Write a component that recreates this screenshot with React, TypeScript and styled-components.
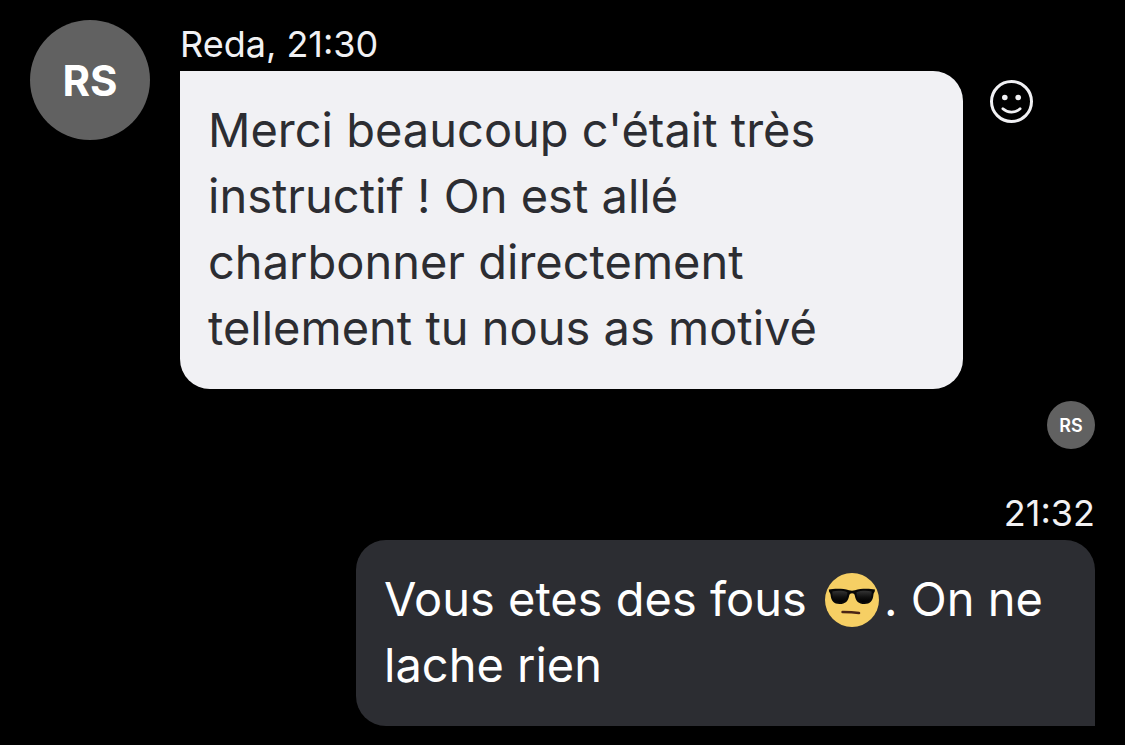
import React from "react";
import styled, { createGlobalStyle } from "styled-components";

const GlobalStyle = createGlobalStyle`
  *, *::before, *::after { box-sizing: border-box; }
  body {
    margin: 0;
    background: #000;
    font-family: Inter, "Liberation Sans", sans-serif;
  }
`;

const Conversation = styled.main`
  display: flex;
  flex-direction: column;
  padding: 20px 30px 19px;
`;

const IncomingRow = styled.article`
  display: flex;
  align-items: flex-start;
`;

const Avatar = styled.div<{ $small?: boolean }>`
  display: flex;
  flex: none;
  align-items: center;
  justify-content: center;
  width: ${(p) => (p.$small ? 48 : 120)}px;
  height: ${(p) => (p.$small ? 48 : 120)}px;
  border-radius: 50%;
  background: #616161;
  color: #fff;
  font-size: ${(p) => (p.$small ? 18 : 42)}px;
  font-weight: ${(p) => (p.$small ? 600 : 700)};
`;

const MessageColumn = styled.div<{ $own?: boolean }>`
  display: flex;
  flex-direction: column;
  align-items: ${(p) => (p.$own ? "flex-end" : "stretch")};
  flex: ${(p) => (p.$own ? "none" : "1")};
  max-width: ${(p) => (p.$own ? "none" : "783px")};
  margin-left: ${(p) => (p.$own ? 0 : 30)}px;
`;

const Meta = styled.div`
  height: 51px;
  color: #f1f1f4;
  font-size: 36px;
  line-height: 48px;
`;

const Bubble = styled.p<{ $own?: boolean }>`
  margin: 0;
  padding: 26px 28px 28px;
  max-width: ${(p) => (p.$own ? "739px" : "783px")};
  border-radius: ${(p) => (p.$own ? "30px 30px 0 30px" : "0 30px 30px 30px")};
  background: ${(p) => (p.$own ? "#2c2d32" : "#f1f1f4")};
  color: ${(p) => (p.$own ? "#fff" : "#2c2d32")};
  font-size: 47px;
  line-height: 66px;
`;

const ReactButton = styled.button`
  display: block;
  flex: none;
  width: 43px;
  height: 43px;
  margin: 60px 0 0 27px;
  padding: 0;
  border: 0;
  background: none;
  cursor: pointer;

  svg {
    display: block;
  }
`;

const ReadReceipt = styled.div`
  display: flex;
  justify-content: flex-end;
  padding: 12px 0 40px;
`;

const Emoji = styled.svg`
  width: 54px;
  height: 54px;
  margin: 0 5px;
  vertical-align: -11px;
`;

function SmileIcon() {
  return (
    <svg width="43" height="43" viewBox="0 0 43 43" fill="none" aria-hidden="true">
      <circle cx="21.5" cy="21.5" r="20" stroke="#f1f1f4" strokeWidth="3" />
      <circle cx="14.8" cy="17.5" r="2.8" fill="#f1f1f4" />
      <circle cx="28.2" cy="17.5" r="2.8" fill="#f1f1f4" />
      <path d="M12.9 28.8C17.5 33.2 25.5 33.2 30.1 28.8" stroke="#f1f1f4" strokeWidth="2.8" strokeLinecap="round" />
    </svg>
  );
}

function SunglassesFace() {
  return (
    <Emoji viewBox="0 0 54 54" role="img" aria-label="Visage cool">
      <defs>
        <linearGradient id="lens" x1="0" y1="0" x2="0" y2="1">
          <stop offset="0" stopColor="#333" />
          <stop offset="0.55" stopColor="#111" />
          <stop offset="1" stopColor="#000" />
        </linearGradient>
      </defs>
      <circle cx="27" cy="27" r="27" fill="#f6cf64" />
      <path
        d="M3.8 16.5C9 15.4 18 15.2 24 17.2C26 17.8 28 17.8 30 17.2C36 15.2 45 15.4 50 16.5L49.6 19C48.8 19.6 48.6 20.5 48.4 22C47.8 28.2 45 31 39.5 31C33.5 31 30.8 28 29.8 22.4C29.4 19.6 24.8 19.6 24.2 22.4C23.2 28 20.5 31 14.5 31C9 31 6.2 28.2 5.6 22C5.4 20.5 5 19.6 4.2 19Z"
        fill="#080808"
      />
      <path d="M7.4 18.5C12 17.3 18.5 17.6 22.3 19.2C22.3 25.5 19.5 29 14.5 29C9.5 29 7 25 7.4 18.5Z" fill="url(#lens)" />
      <path d="M31.5 19.2C35.5 17.6 42 17.3 46.6 18.5C47 25 44.5 29 39.5 29C34.5 29 31.5 25.5 31.5 19.2Z" fill="url(#lens)" />
      <path d="M17.6 39C23 39.1 29 39.4 34 40" fill="none" stroke="#4a2516" strokeWidth="2.6" strokeLinecap="round" />
    </Emoji>
  );
}

export default function App() {
  return (
    <>
      <GlobalStyle />
      <Conversation>
        <IncomingRow>
          <Avatar>RS</Avatar>
          <MessageColumn>
            <Meta>Reda, 21:30</Meta>
            <Bubble>
              Merci beaucoup c'était très instructif ! On est allé charbonner directement
              tellement tu nous as motivé
            </Bubble>
          </MessageColumn>
          <ReactButton type="button" aria-label="Réagir">
            <SmileIcon />
          </ReactButton>
        </IncomingRow>
        <ReadReceipt>
          <Avatar $small>RS</Avatar>
        </ReadReceipt>
        <MessageColumn $own>
          <Meta>21:32</Meta>
          <Bubble $own>
            Vous etes des fous <SunglassesFace />. On ne lache rien
          </Bubble>
        </MessageColumn>
      </Conversation>
    </>
  );
}
